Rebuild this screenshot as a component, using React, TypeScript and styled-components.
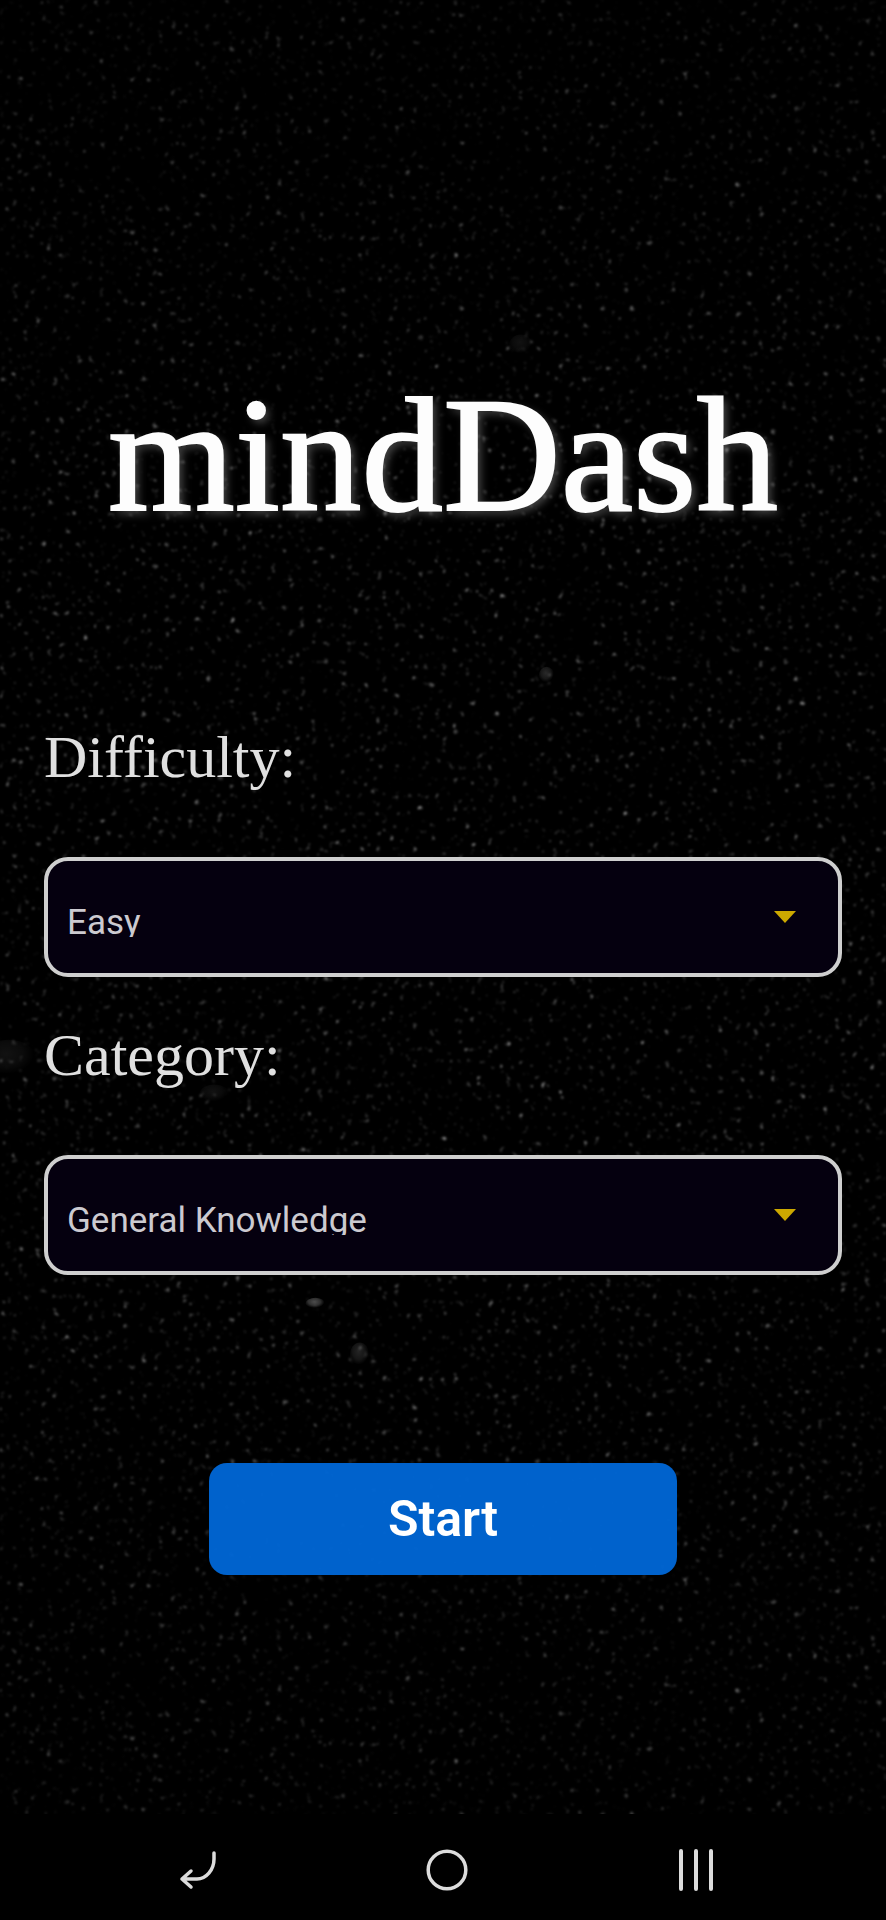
import React, { useState } from 'react';
import styled, { createGlobalStyle } from 'styled-components';

const GlobalStyle = createGlobalStyle`
  *, *::before, *::after { box-sizing: border-box; }
  body { margin: 0; background: #000; }
  button, select { font-family: Roboto, sans-serif; }
`;

const Screen = styled.div`
  position: relative;
  isolation: isolate;
  display: flex;
  flex-direction: column;
  min-height: 100vh;
  color: #e0e0e0;
  background: #000;
`;

const Backdrop = styled.svg`
  position: absolute;
  inset: 0;
  z-index: -1;
  width: 100%;
  height: 100%;
`;

const Main = styled.main`
  flex: 1;
  display: flex;
  flex-direction: column;
  justify-content: center;
  padding: 116px 44px 0;
`;

const Title = styled.h1`
  margin: 0 0 162px;
  color: #fdfdfd;
  font: 400 163px/200px 'Liberation Serif', serif;
  text-align: center;
  -webkit-text-stroke: 2px #fdfdfd;
  text-shadow: 4px 4px 8px rgba(255, 255, 255, 0.28);
`;

const Form = styled.form`
  display: flex;
  flex-direction: column;
`;

const Field = styled.div`
  display: flex;
  flex-direction: column;
  gap: 60px;
  margin-bottom: 38px;
`;

const Label = styled.label`
  font: 400 60px/80px 'Liberation Serif', serif;
`;

const SelectBox = styled.div`
  display: flex;
  align-items: center;
  height: 120px;
  padding: 0 42px 0 19px;
  border: 4px solid #cfcfcf;
  border-radius: 24px;
  background: #05000f;
`;

const ValueClip = styled.div`
  flex: 1;
  display: flex;
  height: 40px;
  overflow: hidden;
`;

const Select = styled.select`
  flex: 1;
  height: 50px;
  padding: 0;
  border: 0;
  outline: 0;
  appearance: none;
  background: transparent;
  color: #cccad0;
  font-size: 35px;
`;

const StartButton = styled.button`
  align-self: center;
  width: 468px;
  max-width: 100%;
  height: 112px;
  margin-top: 150px;
  border: 0;
  border-radius: 18px;
  background: rgba(0, 102, 212, 0.96);
  color: #fff;
  font-size: 50px;
  font-weight: 600;
`;

const NavBar = styled.nav`
  display: grid;
  grid-template-columns: repeat(3, 28.3%);
  justify-content: center;
  height: 106px;
  padding: 6px 0 0 6px;
  background: #000;
`;

const NavButton = styled.button`
  display: grid;
  place-items: center;
  padding: 0 0 0 2px;
  border: 0;
  background: transparent;
  color: #dcdcdc;
`;

const stones = [
  { x: '61.7%', y: '35.2%', rx: 8, ry: 9, tone: 0.16 },
  { x: '35.6%', y: '67.9%', rx: 10, ry: 6, tone: 0.3 },
  { x: '40.6%', y: '70.6%', rx: 10, ry: 13, tone: 0.14 },
  { x: '24.2%', y: '57%', rx: 15, ry: 10, tone: 0.07 },
  { x: '58.8%', y: '18%', rx: 12, ry: 11, tone: 0.07 },
  { x: '1%', y: '55.2%', rx: 28, ry: 20, tone: 0.07 },
];

function Speckles() {
  return (
    <Backdrop aria-hidden="true">
      <defs>
        <filter id="dust" x="0" y="0" width="100%" height="100%" colorInterpolationFilters="sRGB">
          <feTurbulence type="fractalNoise" baseFrequency="0.17" numOctaves="2" seed="7" />
          <feColorMatrix values="0 0 0 0 0.75  0 0 0 0 0.75  0 0 0 0 0.75  3 0 0 0 -2" />
          <feGaussianBlur stdDeviation="1" />
        </filter>
        <linearGradient id="fade" x1="0" y1="0" x2="0" y2="1">
          <stop offset="0" stopColor="#000" stopOpacity="0.4" />
          <stop offset="0.3" stopColor="#000" stopOpacity="0" />
          <stop offset="0.65" stopColor="#000" stopOpacity="0" />
          <stop offset="1" stopColor="#000" stopOpacity="0.4" />
        </linearGradient>
        <radialGradient id="stone" cx="45%" cy="35%">
          <stop offset="0" stopColor="#fff" />
          <stop offset="0.6" stopColor="#fff" stopOpacity="0.6" />
          <stop offset="1" stopColor="#fff" stopOpacity="0" />
        </radialGradient>
      </defs>
      <rect width="100%" height="100%" filter="url(#dust)" />
      <rect width="100%" height="100%" fill="url(#fade)" />
      {stones.map((s) => (
        <ellipse key={s.x} cx={s.x} cy={s.y} rx={s.rx} ry={s.ry} fill="url(#stone)" opacity={s.tone} />
      ))}
    </Backdrop>
  );
}

interface PickerProps {
  id: string;
  label: string;
  options: string[];
}

function Picker({ id, label, options }: PickerProps) {
  const [value, setValue] = useState(options[0]);
  return (
    <Field>
      <Label htmlFor={id}>{label}</Label>
      <SelectBox>
        <ValueClip>
          <Select id={id} value={value} onChange={(e) => setValue(e.target.value)}>
            {options.map((o) => (
              <option key={o}>{o}</option>
            ))}
          </Select>
        </ValueClip>
        <svg width="22" height="12" viewBox="0 0 22 12" aria-hidden="true">
          <path d="M0 0h22L11 12z" fill="#cca800" />
        </svg>
      </SelectBox>
    </Field>
  );
}

export default function App() {
  return (
    <Screen>
      <GlobalStyle />
      <Speckles />
      <Main>
        <Title>mindDash</Title>
        <Form onSubmit={(e) => e.preventDefault()}>
          <Picker id="difficulty" label="Difficulty:" options={['Easy', 'Medium', 'Hard']} />
          <Picker id="category" label="Category:" options={['General Knowledge', 'Science', 'History']} />
          <StartButton type="submit">Start</StartButton>
        </Form>
      </Main>
      <NavBar>
        <NavButton type="button" aria-label="Back">
          <svg width="40" height="44" viewBox="0 0 40 44" fill="none" stroke="currentColor" strokeWidth="3.5" strokeLinecap="round" strokeLinejoin="round">
            <path d="M36 5v6c0 11-8 20-17 20H4M13 23l-9 8 9 8" />
          </svg>
        </NavButton>
        <NavButton type="button" aria-label="Home">
          <svg width="44" height="44" viewBox="0 0 44 44" fill="none" stroke="currentColor" strokeWidth="3.5">
            <circle cx="22" cy="22" r="18.8" />
          </svg>
        </NavButton>
        <NavButton type="button" aria-label="Recent apps">
          <svg width="36" height="44" viewBox="0 0 36 44" fill="none" stroke="currentColor" strokeWidth="4" strokeLinecap="round">
            <path d="M3 3v38M18 3v38M33 3v38" />
          </svg>
        </NavButton>
      </NavBar>
    </Screen>
  );
}
